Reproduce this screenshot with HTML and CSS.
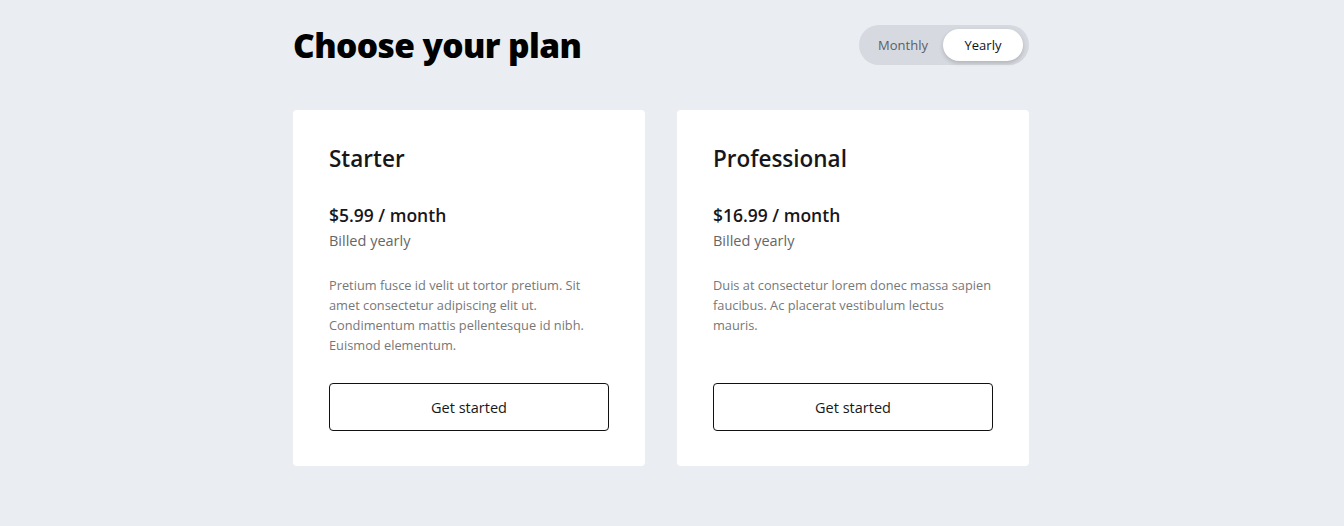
FILE: index.html
```html
<!DOCTYPE html>
<html lang="en">
<head>
<meta charset="utf-8">
<title>Choose your plan</title>
<link rel="stylesheet" href="styles.css">
</head>
<body>
<main class="pricing">
  <header class="pricing-header">
    <h1 class="title">Choose your plan</h1>
    <div class="toggle">
      <button class="toggle-option">Monthly</button>
      <button class="toggle-option is-active">Yearly</button>
    </div>
  </header>
  <section class="cards">
    <article class="card">
      <h2 class="card-title">Starter</h2>
      <p class="price">$5.99 / month</p>
      <p class="billing">Billed yearly</p>
      <p class="desc">Pretium fusce id velit ut tortor pretium. Sit<br>amet consectetur adipiscing elit ut.<br>Condimentum mattis pellentesque id nibh.<br>Euismod elementum.</p>
      <button class="cta">Get started</button>
    </article>
    <article class="card">
      <h2 class="card-title">Professional</h2>
      <p class="price">$16.99 / month</p>
      <p class="billing">Billed yearly</p>
      <p class="desc">Duis at consectetur lorem donec massa sapien<br>faucibus. Ac placerat vestibulum lectus<br>mauris.</p>
      <button class="cta">Get started</button>
    </article>
  </section>
</main>
</body>
</html>
```
FILE: styles.css
```css
* { box-sizing: border-box; }
html, body { margin: 0; padding: 0; }
body {
  background: #eaedf2;
  font-family: "Open Sans", "Noto Sans", sans-serif;
  color: #111;
}
.pricing {
  width: 736px;
  margin-left: 293px;
  padding-top: 25px;
}
.pricing-header {
  display: flex;
  justify-content: space-between;
  align-items: center;
  height: 40px;
}
.title {
  margin: 0;
  font-size: 33.5px;
  font-weight: 800;
  letter-spacing: -0.6px;
  color: #000;
}
.toggle {
  display: flex;
  align-items: center;
  height: 40px;
  width: 170px;
  padding: 4px 6px 4px 4px;
  background: #d6d9df;
  border-radius: 20px;
}
.toggle-option {
  border: 0;
  background: transparent;
  font-family: inherit;
  font-size: 13px;
  color: #5b6068;
  height: 32px;
  border-radius: 16px;
  flex: 1;
  padding: 0;
  cursor: pointer;
}
.toggle-option.is-active {
  background: #fff;
  color: #111;
  box-shadow: 0 2px 4px rgba(0,0,0,0.18);
}
.cards {
  display: grid;
  grid-template-columns: 352px 352px;
  gap: 32px;
  margin-top: 45px;
}
.card {
  display: flex;
  flex-direction: column;
  background: #fff;
  border-radius: 4px;
  padding: 33px 36px 35px;
  height: 356px;
}
.card-title {
  margin: 0;
  font-size: 22.5px;
  font-weight: 600;
  line-height: 32px;
  color: #17171b;
}
.price {
  margin: 28px 0 0;
  font-size: 17.5px;
  font-weight: 600;
  line-height: 24px;
  color: #17171b;
}
.billing {
  margin: 4px 0 0;
  font-size: 14.5px;
  line-height: 20px;
  color: #666;
}
.desc {
  margin: 24px -12px 0 0;
  font-size: 12.8px;
  line-height: 20px;
  color: #777;
  white-space: nowrap;
}
.cta {
  margin-top: auto;
  height: 48px;
  width: 100%;
  background: #fff;
  border: 1px solid #111;
  border-radius: 4px;
  font-family: inherit;
  font-size: 14.5px;
  color: #17171b;
  cursor: pointer;
}
```
